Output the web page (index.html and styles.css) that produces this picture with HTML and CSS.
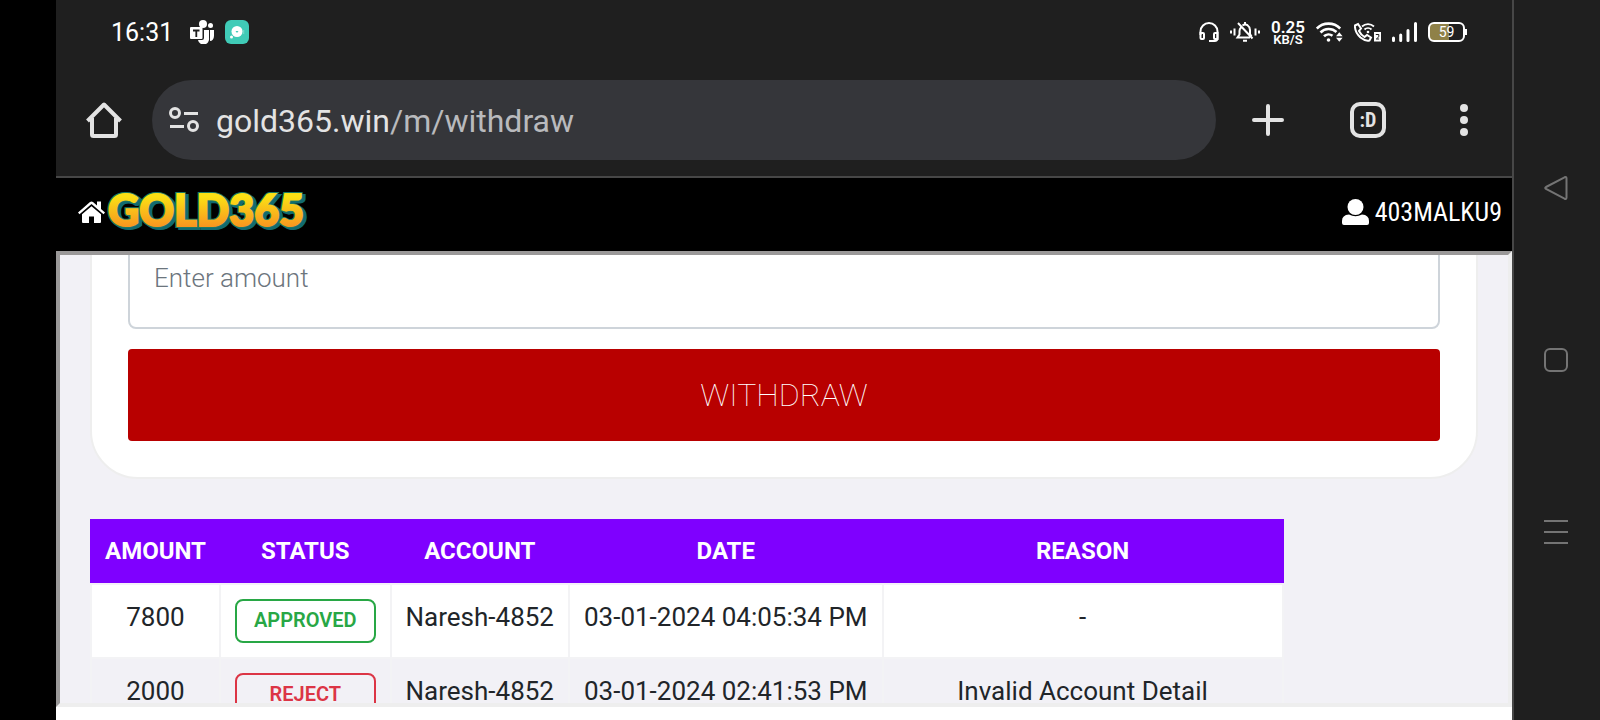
FILE: index.html
```html
<!DOCTYPE html>
<html lang="en">
<head>
    <meta charset="UTF-8">
    <meta name="viewport" content="width=device-width, initial-scale=1.0">
    <title>Withdraw - GOLD365</title>
    <link rel="stylesheet" href="styles.css">
</head>
<body>
    <div class="screen">
        <div class="status-bar">
            <div class="status-left">
                <span class="clock">16:31</span>
                <svg class="teams" width="24" height="24" viewBox="0 0 24 24" fill="#fff">
                    <circle cx="13" cy="4" r="4"/>
                    <circle cx="20.500" cy="5.500" r="2.500"/>
                    <path d="M14 10h5v8a5 5 0 0 1-11 2h4a2 2 0 0 0 2-2z"/>
                    <path d="M20 10h4v6c0 3-2 5-4 5z"/>
                    <rect x="0" y="7" width="12.500" height="12" rx="1"/>
                    <path d="M3 10.500h6.500M6.300 10.500v6.500" fill="none" stroke="#1f1f1f" stroke-width="1.800"/>
                </svg>
                <svg width="24" height="24" viewBox="0 0 24 24">
                    <rect width="24" height="24" rx="6" fill="#40cbb7"/>
                    <circle cx="12" cy="11.500" r="5.500" fill="#fff"/>
                    <path d="M10.500 11h3l-1.500 2z" fill="#40cbb7"/>
                    <circle cx="6.500" cy="17" r="1.500" fill="#fff"/>
                    <path d="M18.500 10.500v4" stroke="#9fe5db" stroke-width="1.500" stroke-dasharray="1 1"/>
                </svg>
            </div>
            <div class="status-right">
                <svg width="20" height="20" viewBox="0 0 20 20" fill="none" stroke="#fff" stroke-width="2">
                    <path d="M1.500 13V9.500a8.500 8.500 0 0 1 17 0V16q0 3-3 3h-5.500"/>
                    <path d="M1.500 11H4q1 0 1 1v4q0 1-1 1H2.500q-1 0-1-1zM18.500 11H16q-1 0-1 1v4q0 1 1 1h2.500z"/>
                </svg>
                <svg width="30" height="20" viewBox="0 0 30 20" fill="none" stroke="#fff" stroke-width="2">
                    <path d="M1 8.500v3M4.500 6.500v7M29 8.500v3M25.500 6.500v7"/>
                    <path d="M11 5.500Q9.500 7 9.500 9v3.500L7.500 15.500H20M12.500 3.500Q15 1.500 17.500 3.200 20 5 20 8v4l1.500 2.500M8 1l14.500 15.500"/>
                    <path d="M13 18.800h4M15 0v2"/>
                </svg>
                <div class="speed"><b>0.25</b><span>KB/S</span></div>
                <svg width="27" height="20" viewBox="0 0 27 20" fill="none" stroke="#fff" stroke-width="2.600">
                    <path d="M.800 6.500a16.500 16.500 0 0 1 23.400 0M4.500 10.500a11.500 11.500 0 0 1 16-.500M8 14.300a6.500 6.500 0 0 1 8.500-.500"/>
                    <circle cx="12.500" cy="18" r="1.800" fill="#fff" stroke="none"/>
                    <path d="m20 14.200 3.300-4 3.300 4zM20 15.800l3.300 4 3.300-4z" fill="#fff" stroke="none"/>
                </svg>
                <svg width="27" height="20" viewBox="0 0 27 20" fill="none" stroke="#fff" stroke-width="2">
                    <path d="M1 3.500 4 2l3 4.500-2 2.500q2 4 5.500 6l2.500-2 4 2.500-1.500 3q-4 1-9-3Q.500 10 1 3.500z"/>
                    <path d="M8 4.500a9 9 0 0 1 12 0M10.500 7.500a5 5 0 0 1 7 0" stroke-width="1.800"/>
                    <circle cx="14" cy="10" r="1.300" fill="#fff" stroke="none"/>
                    <rect x="20" y="10" width="7" height="9.500" fill="#fff" stroke="none"/>
                    <path d="M21.800 12.500h3v2.300l-2.500 2.200h2.800" stroke="#1f1f1f" stroke-width="1"/>
                </svg>
                <svg width="25" height="20" viewBox="0 0 25 20" stroke="#fff" stroke-width="3" stroke-linecap="round">
                    <path d="M1.500 16v2.500M8.700 13v5.500M16 8.500v10M23.500 1.500v17"/>
                </svg>
                <div class="battery"><span class="battery-body">59</span></div>
            </div>
        </div>

        <div class="toolbar">
            <button class="tool-btn" aria-label="Home">
                <svg width="36" height="36" viewBox="0 0 36 36" fill="none" stroke="#e3e3e3" stroke-width="4" stroke-linejoin="round">
                    <path d="M1.500 19 18 2.500 34.500 19"/>
                    <path d="M6 16v16.500q0 1.500 1.500 1.500h21q1.500 0 1.500-1.500V16"/>
                </svg>
            </button>
            <div class="omnibox">
                <svg width="30" height="26" viewBox="0 0 30 26" fill="none" stroke="#e3e3e3" stroke-width="3">
                    <circle cx="6" cy="6" r="4.500"/>
                    <path d="M15 6.500h14M1 19.500h14"/>
                    <circle cx="24" cy="19" r="4.500"/>
                </svg>
                <span class="url">gold365.win<span class="url-path">/m/withdraw</span></span>
            </div>
            <button class="tool-btn new-tab" aria-label="New tab">
                <svg width="32" height="32" viewBox="0 0 32 32" stroke="#e3e3e3" stroke-width="4" stroke-linecap="round">
                    <path d="M16 2v28M2 16h28"/>
                </svg>
            </button>
            <button class="tool-btn" aria-label="Tabs"><span class="tab-count">:D</span></button>
            <button class="tool-btn" aria-label="Menu">
                <svg width="8" height="32" viewBox="0 0 8 32" fill="#e3e3e3">
                    <circle cx="4" cy="4" r="4"/>
                    <circle cx="4" cy="16" r="4"/>
                    <circle cx="4" cy="28" r="4"/>
                </svg>
            </button>
        </div>

        <header class="site-header">
            <a href="#" class="brand" aria-label="GOLD365 home">
                <svg width="27" height="22" viewBox="0 0 27 22" fill="#fff">
                    <path d="M0 11.500 12 1q1.500-1.200 3 0l4 3.500V.500h4v7.500l4 3.500-1.500 1.700L13.500 3 1.500 13.200z"/>
                    <path d="M13.500 5.200 23 13.300V21q0 1-1 1h-6v-6.500h-5V22H5q-1 0-1-1v-7.700z"/>
                </svg>
                <svg class="logo" width="212" height="60" viewBox="0 0 212 60">
                    <defs>
                        <linearGradient id="gold" x1="0" y1="0" x2="0" y2="1">
                            <stop offset="0.250" stop-color="#fbe014"/>
                            <stop offset="0.850" stop-color="#f79420"/>
                        </linearGradient>
                    </defs>
                    <text class="logo-shadow" x="6" y="46">GOLD365</text>
                    <text class="logo-edge" x="3" y="44">GOLD365</text>
                    <text class="logo-face" x="3" y="44">GOLD365</text>
                </svg>
            </a>
            <a href="#" class="user">
                <svg width="27" height="26" viewBox="0 0 27 26" fill="#fff">
                    <circle cx="13.500" cy="8" r="8"/>
                    <path d="M7 15.500q6.500 3.500 13 0 7 .500 7 6.500v2q0 2-2 2H2q-2 0-2-2v-2q0-6 7-6.500z"/>
                </svg>
                <span>403MALKU9</span>
            </a>
        </header>

        <main class="frame">
            <div class="content">
                <form class="card">
                    <input type="text" class="amount" placeholder="Enter amount" aria-label="Enter amount">
                    <button type="button" class="withdraw">WITHDRAW</button>
                </form>

                <table class="history">
                    <thead>
                        <tr>
                            <th>AMOUNT</th>
                            <th>STATUS</th>
                            <th>ACCOUNT</th>
                            <th>DATE</th>
                            <th class="reason">REASON</th>
                        </tr>
                    </thead>
                    <tbody>
                        <tr>
                            <td>7800</td>
                            <td><span class="badge approved">APPROVED</span></td>
                            <td>Naresh-4852</td>
                            <td>03-01-2024 04:05:34 PM</td>
                            <td>-</td>
                        </tr>
                        <tr>
                            <td>2000</td>
                            <td><span class="badge reject">REJECT</span></td>
                            <td>Naresh-4852</td>
                            <td>03-01-2024 02:41:53 PM</td>
                            <td>Invalid Account Detail</td>
                        </tr>
                    </tbody>
                </table>
            </div>
        </main>
    </div>

    <nav class="nav-rail">
        <button aria-label="Back">
            <svg width="24" height="24" viewBox="0 0 24 24"><path d="M2 11 20.500 1.300q2-.800 2 1.200v19q0 2-2 1.200L2 13q-1.500-1 0-2z"/></svg>
        </button>
        <button aria-label="Home screen">
            <svg width="24" height="24" viewBox="0 0 24 24"><rect x="1" y="1" width="22" height="22" rx="5"/></svg>
        </button>
        <button aria-label="Recent apps">
            <svg width="24" height="24" viewBox="0 0 24 24"><path d="M0 1h24M0 12h24M0 23h24"/></svg>
        </button>
    </nav>
</body>
</html>
```
FILE: styles.css
```css
:root {
    --chrome-bg: #1f1f1f;
    --chrome-line: #474747;
    --icon-color: #e3e3e3;
    --page-bg: #f2f1f6;
    --table-head: #7f00ff;
    --table-line: #f3f3f5;
}

* {
    box-sizing: border-box;
}

body {
    margin: 0;
    height: 100vh;
    padding-left: 56px;
    display: flex;
    overflow: hidden;
    background-color: #000;
    font-family: Roboto, "Liberation Sans", sans-serif;
}

button {
    padding: 0;
    border: none;
    background: none;
    font-family: inherit;
    cursor: pointer;
}

svg {
    display: block;
    flex: none;
}

.screen {
    flex: 1;
    min-width: 0;
    display: flex;
    flex-direction: column;
    background-color: #fff;
}

/* phone status bar */
.status-bar {
    height: 64px;
    padding: 0 45px 0 55px;
    display: flex;
    justify-content: space-between;
    background-color: var(--chrome-bg);
    color: #fff;
}

.status-left,
.status-right {
    display: flex;
    align-items: center;
    gap: 11px;
}

.clock {
    font-size: 25px;
}

.teams {
    margin-left: 6px;
}

.speed {
    display: flex;
    flex-direction: column;
    align-items: center;
    font-size: 13px;
    font-weight: 600;
    line-height: 11px;
}

.speed b {
    font-size: 17px;
    font-weight: 600;
    line-height: 14px;
}

.battery {
    display: flex;
    align-items: center;
}

.battery::after {
    content: '';
    width: 2px;
    height: 6px;
    background-color: #fff;
}

.battery-body {
    width: 37px;
    height: 20px;
    border: 2px solid #fff;
    border-radius: 6px;
    background: linear-gradient(90deg, #8f8148 59%, transparent 59%);
    font-size: 14px;
    line-height: 16px;
    text-align: center;
}

/* browser toolbar */
.toolbar {
    height: 114px;
    padding: 16px 0;
    display: flex;
    background-color: var(--chrome-bg);
    border-bottom: 2px solid var(--chrome-line);
}

.tool-btn {
    width: 96px;
    height: 80px;
    display: flex;
    align-items: center;
    justify-content: center;
}

.new-tab {
    width: 104px;
}

.omnibox {
    flex: 1;
    height: 80px;
    padding: 0 17px;
    display: flex;
    align-items: center;
    gap: 17px;
    border-radius: 40px;
    background-color: #35363a;
}

.url {
    padding-top: 2px;
    color: var(--icon-color);
    font-size: 32px;
}

.url-path {
    color: #b9babd;
}

.tab-count {
    width: 36px;
    height: 36px;
    border: 4px solid var(--icon-color);
    border-radius: 10px;
    color: var(--icon-color);
    font-family: "Roboto Condensed", Roboto, sans-serif;
    font-size: 20px;
    font-weight: 700;
    line-height: 28px;
}

/* site */
.site-header {
    height: 73px;
    padding: 0 10px 6px 22px;
    display: flex;
    align-items: center;
    justify-content: space-between;
    background-color: #000;
}

.brand,
.user {
    display: flex;
    align-items: center;
    color: #fff;
    text-decoration: none;
}

.logo text {
    font-family: Lato, sans-serif;
    font-size: 43px;
    font-weight: 900;
}

.logo .logo-shadow {
    fill: #126a70;
    stroke: #126a70;
    stroke-width: 4px;
}

.logo .logo-edge {
    fill: none;
    stroke: #1d7a63;
    stroke-width: 4px;
}

.logo .logo-face {
    fill: url(#gold);
    stroke: url(#gold);
    stroke-width: 2px;
}

.user {
    gap: 6px;
    font-family: "Roboto Condensed", Roboto, sans-serif;
    font-size: 26px;
}

.frame {
    flex: 1;
    min-height: 0;
    margin-bottom: 13px;
    overflow: hidden;
    border: 4px solid #eee;
    border-top-color: #9a9898;
    border-left-color: #9a9898;
    background-color: var(--page-bg);
}

/* the form is partly scrolled under the header */
.content {
    margin-top: -66px;
    padding: 0 30px;
}

.card {
    display: flex;
    flex-direction: column;
    gap: 20px;
    padding: 36px;
    border: 2px solid #eee;
    border-radius: 48px;
    background-color: #fff;
}

.amount {
    height: 102px;
    padding: 0 24px;
    border: 2px solid #ced4da;
    border-radius: 8px;
    font-family: inherit;
    font-size: 26px;
    font-weight: 300;
}

.amount::placeholder {
    color: #6c757d;
    opacity: 1;
}

.withdraw {
    height: 92px;
    border-radius: 4px;
    background-color: #b80000;
    color: #fff;
    font-size: 32px;
    font-weight: 100;
}

.history {
    margin-top: 40px;
    border-collapse: collapse;
    color: #212529;
    font-size: 26px;
    line-height: 36px;
    text-align: center;
    white-space: nowrap;
}

.history th {
    padding: 13px 13px 15px;
    border: 2px solid var(--table-head);
    border-bottom-color: #f5effa;
    background-color: var(--table-head);
    color: #fff;
    font-size: 24px;
    line-height: 34px;
}

.history td {
    padding: 14px;
    border: 2px solid var(--table-line);
    background-color: #fff;
    vertical-align: top;
}

.history tr:nth-child(even) td {
    background-color: var(--page-bg);
}

.history .reason {
    width: 400px;
}

.badge {
    display: block;
    padding: 9px 17px 11px;
    border: 2px solid;
    border-radius: 8px;
    font-size: 20px;
    font-weight: 600;
    line-height: 20px;
}

.approved {
    color: #28a745;
}

.reject {
    color: #dc3545;
}

/* android navigation */
.nav-rail {
    width: 88px;
    padding-right: 2px;
    display: flex;
    flex-direction: column;
    align-items: center;
    justify-content: center;
    gap: 148px;
    background-color: var(--chrome-bg);
    border-left: 2px solid var(--chrome-line);
}

.nav-rail svg {
    fill: none;
    stroke: #747474;
    stroke-width: 2;
}
```
